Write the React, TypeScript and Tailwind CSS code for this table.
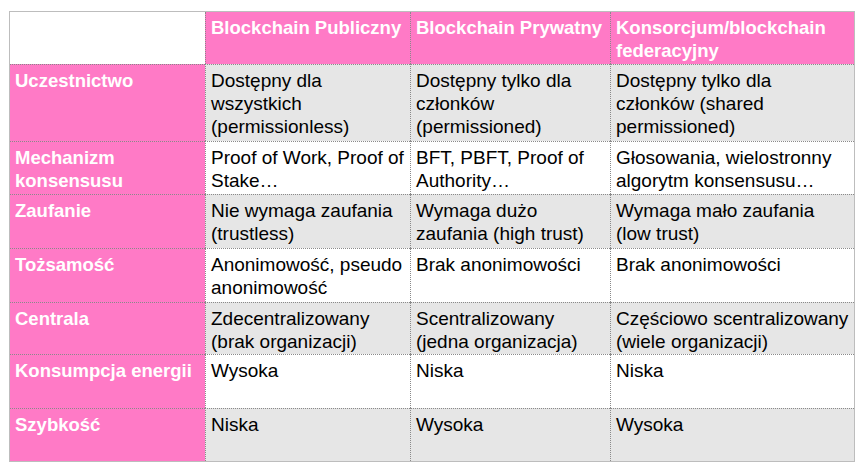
import React from 'react';

type Row = {
  label: string[];
  cells: string[][];
};

const headers: string[][] = [
  ['Blockchain Publiczny'],
  ['Blockchain Prywatny'],
  ['Konsorcjum/blockchain', 'federacyjny'],
];

const rows: Row[] = [
  {
    label: ['Uczestnictwo'],
    cells: [
      ['Dostępny dla', 'wszystkich', '(permissionless)'],
      ['Dostępny tylko dla', 'członków', '(permissioned)'],
      ['Dostępny tylko dla', 'członków (shared', 'permissioned)'],
    ],
  },
  {
    label: ['Mechanizm', 'konsensusu'],
    cells: [
      ['Proof of Work, Proof of', 'Stake…'],
      ['BFT, PBFT, Proof of', 'Authority…'],
      ['Głosowania, wielostronny', 'algorytm konsensusu…'],
    ],
  },
  {
    label: ['Zaufanie'],
    cells: [
      ['Nie wymaga zaufania', '(trustless)'],
      ['Wymaga dużo', 'zaufania (high trust)'],
      ['Wymaga mało zaufania', '(low trust)'],
    ],
  },
  {
    label: ['Tożsamość'],
    cells: [['Anonimowość, pseudo', 'anonimowość'], ['Brak anonimowości'], ['Brak anonimowości']],
  },
  {
    label: ['Centrala'],
    cells: [
      ['Zdecentralizowany', '(brak organizacji)'],
      ['Scentralizowany', '(jedna organizacja)'],
      ['Częściowo scentralizowany', '(wiele organizacji)'],
    ],
  },
  {
    label: ['Konsumpcja energii'],
    cells: [['Wysoka'], ['Niska'], ['Niska']],
  },
  {
    label: ['Szybkość'],
    cells: [['Niska'], ['Wysoka'], ['Wysoka']],
  },
];

const Lines = ({ lines }: { lines: string[] }) => (
  <>
    {lines.map((l, i) => (
      <div key={i} className="whitespace-nowrap">
        {l}
      </div>
    ))}
  </>
);

export default function App() {
  return (
    <div className="w-[867px] h-[471px] bg-white pt-[11px] pl-[9px] font-['Liberation_Sans',Arial,sans-serif] text-[18.5px] leading-[23px]">
      <div className="w-[846px] border border-[#bdbdbd]">
        <div className="grid grid-cols-[195px_205px_200px_244px] grid-rows-[52px_77px_53px_54px_54px_52px_54px_53px]">
          {/* header row */}
          <div className="bg-white" />
          {headers.map((h, i) => (
            <div
              key={i}
              className="bg-[#ff7ac6] border-l border-dotted border-[#8a8a8a] pl-[5px] pt-[4px] font-bold text-white"
            >
              <Lines lines={h} />
            </div>
          ))}

          {rows.map((row, r) => {
            const bg = r % 2 === 0 ? 'bg-[#e6e6e6]' : 'bg-white';
            return (
              <React.Fragment key={r}>
                <div className="bg-[#ff7ac6] border-t border-dotted border-[#8a8a8a] pl-[5px] pt-[4px] font-bold text-white">
                  <Lines lines={row.label} />
                </div>
                {row.cells.map((c, i) => (
                  <div
                    key={i}
                    className={`${bg} border-t border-l border-dotted border-[#8a8a8a] pl-[5px] pt-[4px] text-[19px] text-black`}
                  >
                    <Lines lines={c} />
                  </div>
                ))}
              </React.Fragment>
            );
          })}
        </div>
      </div>
    </div>
  );
}
